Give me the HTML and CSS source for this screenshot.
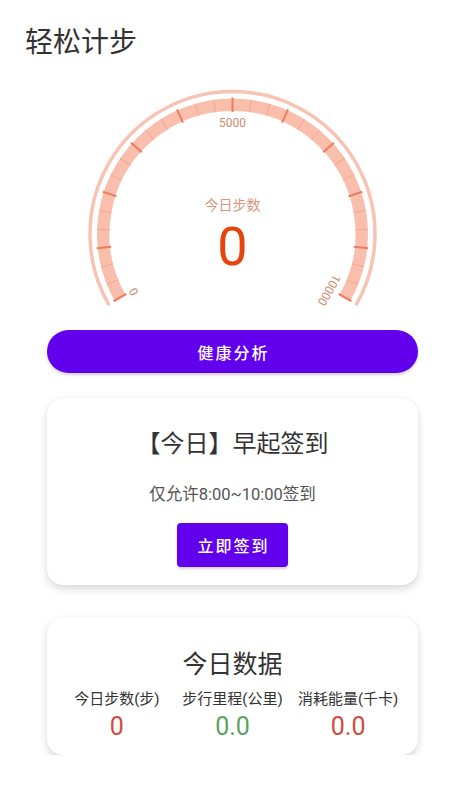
FILE: index.html
```html
<!DOCTYPE html>
<html lang="zh-CN">
<head>
<meta charset="utf-8">
<title>轻松计步</title>
<link rel="stylesheet" href="styles.css">
</head>
<body>
<div class="page">
  <h1 class="app-title">轻松计步</h1>
  <div class="column">
    <div class="gauge">
      <svg class="gauge-svg" width="371" height="270" viewBox="0 0 371 270" xmlns="http://www.w3.org/2000/svg">
        <g transform="translate(185.5,174)">
          <path class="outer-arc" d="M -123.41 71.25 A 142.5 142.5 0 1 1 123.41 71.25"/>
          <path class="band" d="M -111.93 64.63 A 129.25 129.25 0 1 1 111.93 64.63"/>
          <g class="minor">
            <line x1="123" y1="0" x2="135.5" y2="0" transform="rotate(-202)"/>
            <line x1="123" y1="0" x2="135.5" y2="0" transform="rotate(-194)"/>
            <line x1="123" y1="0" x2="135.5" y2="0" transform="rotate(-178)"/>
            <line x1="123" y1="0" x2="135.5" y2="0" transform="rotate(-170)"/>
            <line x1="123" y1="0" x2="135.5" y2="0" transform="rotate(-154)"/>
            <line x1="123" y1="0" x2="135.5" y2="0" transform="rotate(-146)"/>
            <line x1="123" y1="0" x2="135.5" y2="0" transform="rotate(-130)"/>
            <line x1="123" y1="0" x2="135.5" y2="0" transform="rotate(-122)"/>
            <line x1="123" y1="0" x2="135.5" y2="0" transform="rotate(-106)"/>
            <line x1="123" y1="0" x2="135.5" y2="0" transform="rotate(-98)"/>
            <line x1="123" y1="0" x2="135.5" y2="0" transform="rotate(-82)"/>
            <line x1="123" y1="0" x2="135.5" y2="0" transform="rotate(-74)"/>
            <line x1="123" y1="0" x2="135.5" y2="0" transform="rotate(-58)"/>
            <line x1="123" y1="0" x2="135.5" y2="0" transform="rotate(-50)"/>
            <line x1="123" y1="0" x2="135.5" y2="0" transform="rotate(-34)"/>
            <line x1="123" y1="0" x2="135.5" y2="0" transform="rotate(-26)"/>
            <line x1="123" y1="0" x2="135.5" y2="0" transform="rotate(-10)"/>
            <line x1="123" y1="0" x2="135.5" y2="0" transform="rotate(-2)"/>
            <line x1="123" y1="0" x2="135.5" y2="0" transform="rotate(14)"/>
            <line x1="123" y1="0" x2="135.5" y2="0" transform="rotate(22)"/>
          </g>
          <g class="major">
            <line x1="122" y1="0" x2="136.5" y2="0" transform="rotate(-209.4)"/>
            <line x1="122" y1="0" x2="136.5" y2="0" transform="rotate(-186)"/>
            <line x1="122" y1="0" x2="136.5" y2="0" transform="rotate(-162)"/>
            <line x1="122" y1="0" x2="136.5" y2="0" transform="rotate(-138)"/>
            <line x1="122" y1="0" x2="136.5" y2="0" transform="rotate(-114)"/>
            <line x1="122" y1="0" x2="136.5" y2="0" transform="rotate(-90)"/>
            <line x1="122" y1="0" x2="136.5" y2="0" transform="rotate(-66)"/>
            <line x1="122" y1="0" x2="136.5" y2="0" transform="rotate(-42)"/>
            <line x1="122" y1="0" x2="136.5" y2="0" transform="rotate(-18)"/>
            <line x1="122" y1="0" x2="136.5" y2="0" transform="rotate(6)"/>
            <line x1="122" y1="0" x2="136.5" y2="0" transform="rotate(29.4)"/>
          </g>
          <text class="g-label" x="0" y="-111" text-anchor="middle" dominant-baseline="central">5000</text>
          <text class="g-label" x="0" y="0" text-anchor="middle" dominant-baseline="central" transform="translate(-98.7,57.5) rotate(-120)">0</text>
          <text class="g-label" x="0" y="0" text-anchor="middle" dominant-baseline="central" transform="translate(96.6,56) rotate(120)">10000</text>
        </g>
      </svg>
      <div class="gauge-readout">
        <div class="g-caption">今日步数</div>
        <div class="g-value">0</div>
      </div>
    </div>

    <button class="btn-pill" type="button">健康分析</button>

    <section class="card checkin">
      <h2 class="card-title">【今日】早起签到</h2>
      <p class="hint">仅允许8:00~10:00签到</p>
      <button class="btn-rect" type="button">立即签到</button>
    </section>

    <section class="card stats">
      <h2 class="card-title">今日数据</h2>
      <div class="stat-grid">
        <div class="stat">
          <div class="stat-label">今日步数(步)</div>
          <div class="stat-value red">0</div>
        </div>
        <div class="stat">
          <div class="stat-label">步行里程(公里)</div>
          <div class="stat-value green">0.0</div>
        </div>
        <div class="stat">
          <div class="stat-label">消耗能量(千卡)</div>
          <div class="stat-value red">0.0</div>
        </div>
      </div>
    </section>
  </div>
</div>
</body>
</html>
```

FILE: styles.css
```css
* {
  box-sizing: border-box;
}

html, body {
  margin: 0;
  padding: 0;
  background: #ffffff;
}

body {
  font-family: Roboto, "Noto Sans CJK SC", sans-serif;
  color: #333333;
}

.page {
  width: 450px;
}

.app-title {
  margin: 20px 0 0 25px;
  font-family: "Noto Sans CJK SC", sans-serif;
  font-size: 28px;
  line-height: 40px;
  font-weight: 400;
  color: #333333;
}

.column {
  padding: 0 32px 0 47px;
}

.gauge {
  position: relative;
  height: 270px;
}

.gauge-svg {
  display: block;
}

.outer-arc {
  fill: none;
  stroke: #f6c3b4;
  stroke-width: 3.5;
}

.band {
  fill: none;
  stroke: #f9bfac;
  stroke-width: 12.5;
}

.minor line {
  stroke: #f2a892;
  stroke-width: 1;
}

.major line {
  stroke: #ec7d5c;
  stroke-width: 2;
}

.g-label {
  font-family: Roboto, sans-serif;
  font-size: 12px;
  fill: #d08a70;
}

.gauge-readout {
  position: absolute;
  top: 135.5px;
  left: 0;
  right: 0;
  display: flex;
  flex-direction: column;
  align-items: center;
}

.g-caption {
  font-family: "Noto Sans CJK SC", sans-serif;
  font-size: 14px;
  line-height: 16px;
  color: #d9967b;
}

.g-value {
  margin-top: 13.5px;
  font-family: Roboto, sans-serif;
  font-size: 54px;
  line-height: 44px;
  color: #e8440e;
}

.btn-pill {
  display: block;
  width: 100%;
  height: 43px;
  border: none;
  border-radius: 22px;
  background: #6200ee;
  color: #ffffff;
  font-family: "Noto Sans CJK SC", sans-serif;
  font-size: 16px;
  font-weight: 500;
  letter-spacing: 2px;
  padding: 0 0 0 2px;
  box-shadow: 0 2px 3px rgba(0, 0, 0, 0.18);
}

.card {
  background: #ffffff;
  border-radius: 16px;
  box-shadow: 0 4px 9px rgba(0, 0, 0, 0.15), 0 0 2px rgba(0, 0, 0, 0.06);
  text-align: center;
}

.checkin {
  margin-top: 25px;
  height: 187px;
  padding: 26px 0 18px;
  display: flex;
  flex-direction: column;
  align-items: center;
}

.card-title {
  margin: 0;
  font-family: "Noto Sans CJK SC", sans-serif;
  font-size: 24px;
  line-height: 36px;
  font-weight: 400;
  color: #333333;
}

.hint {
  margin: 23px 0 0;
  font-size: 16.5px;
  line-height: 24px;
  color: #555555;
}

.btn-rect {
  margin-top: 16px;
  width: 111px;
  height: 44px;
  border: none;
  border-radius: 4px;
  background: #6200ee;
  color: #ffffff;
  font-family: "Noto Sans CJK SC", sans-serif;
  font-size: 16px;
  font-weight: 500;
  letter-spacing: 2px;
  padding: 0 0 0 2px;
  box-shadow: 0 2px 3px rgba(0, 0, 0, 0.18);
}

.stats {
  margin-top: 32px;
  height: 138px;
  padding: 27px 12px 12px;
}

.stats .card-title {
  font-size: 25px;
}

.stat-grid {
  display: grid;
  grid-template-columns: 1fr 1fr 1fr;
  margin-top: 8px;
}

.stat-label {
  font-size: 15px;
  line-height: 22px;
  color: #333333;
}

.stat-value {
  margin-top: 1px;
  font-size: 25px;
  line-height: 32px;
}

.red {
  color: #d04b40;
}

.green {
  color: #5ba25f;
}
```
